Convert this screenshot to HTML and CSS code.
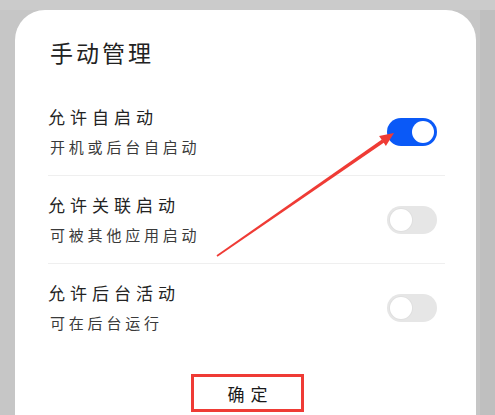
FILE: index.html
```html
<!DOCTYPE html>
<html lang="zh-CN">
<head>
<meta charset="utf-8">
<title>手动管理</title>
<link rel="stylesheet" href="styles.css">
</head>
<body>
<div class="screen">
  <div class="card">
    <h1 class="title">手动管理</h1>
    <div class="row divided">
      <div class="texts">
        <div class="label">允许自启动</div>
        <div class="desc">开机或后台自启动</div>
      </div>
      <div class="toggle on"><span class="knob"></span></div>
    </div>
    <div class="row divided">
      <div class="texts">
        <div class="label">允许关联启动</div>
        <div class="desc">可被其他应用启动</div>
      </div>
      <div class="toggle"><span class="knob"></span></div>
    </div>
    <div class="row">
      <div class="texts">
        <div class="label">允许后台活动</div>
        <div class="desc">可在后台运行</div>
      </div>
      <div class="toggle"><span class="knob"></span></div>
    </div>
    <div class="actions">
      <div class="ok">确定</div>
    </div>
  </div>
  <svg class="arrow" width="495" height="415" viewBox="0 0 495 415">
    <polygon points="217.5,256.7 216.5,255.3 381.9,139.4 384.1,142.6" fill="#ef3b35"/>
    <polygon points="394,133 385.9,145.9 379.1,136.1" fill="#ef3b35"/>
  </svg>
</div>
</body>
</html>
```

FILE: styles.css
```css
html, body {
  margin: 0;
  padding: 0;
}
body {
  width: 495px;
  height: 415px;
  overflow: hidden;
  background: linear-gradient(to right, #c6c6c6 0, #c6c6c6 480px, #bfbfbf 480px, #bfbfbf 495px);
  font-family: "Noto Sans CJK SC", "Noto Sans", sans-serif;
}
.screen {
  position: relative;
  width: 495px;
  height: 415px;
  padding-top: 10px;
  box-sizing: border-box;
  overflow: hidden;
  background: linear-gradient(to bottom, #cbcbcb 0, #cbcbcb 10px, transparent 10px);
}
.card {
  margin-left: 15px;
  width: 461px;
  height: 405px;
  background: #ffffff;
  border-radius: 30px 30px 0 0;
  padding: 27px 31px 0 33px;
  box-sizing: border-box;
}
.title {
  margin: 0 0 21px 2px;
  font-size: 23px;
  line-height: 30px;
  font-weight: 400;
  letter-spacing: 3px;
  color: #222222;
}
.row {
  display: flex;
  align-items: center;
  justify-content: space-between;
  height: 87px;
  box-sizing: content-box;
}
.row.divided {
  border-bottom: 1px solid #efefef;
}
.texts {
  display: flex;
  flex-direction: column;
}
.label {
  font-size: 17px;
  line-height: 24px;
  letter-spacing: 5px;
  color: #232323;
}
.desc {
  margin-top: 7px;
  margin-left: 2px;
  font-size: 15px;
  line-height: 22px;
  letter-spacing: 3.8px;
  color: #3a3a3a;
}
.toggle {
  position: relative;
  width: 50px;
  height: 28px;
  border-radius: 14px;
  background: #e6e6e6;
  margin-right: 8px;
  flex-shrink: 0;
}
.toggle .knob {
  position: absolute;
  top: 3px;
  left: 3px;
  width: 22px;
  height: 22px;
  border-radius: 50%;
  background: #ffffff;
  box-shadow: 0 0 0 1px #e0e0e0;
}
.toggle.on {
  background: #0a59f7;
}
.toggle.on .knob {
  left: auto;
  right: 3px;
  box-shadow: none;
}
.actions {
  display: flex;
  justify-content: center;
  margin-top: 23px;
}
.ok {
  width: 113px;
  height: 38px;
  box-sizing: border-box;
  border: 3px solid #ef3b35;
  display: flex;
  align-items: center;
  justify-content: center;
  font-size: 17px;
  letter-spacing: 6px;
  padding-left: 6px;
  color: #1a1a1a;
  margin-left: 2px;
}
.arrow {
  position: absolute;
  left: 0;
  top: 0;
  pointer-events: none;
}
```
